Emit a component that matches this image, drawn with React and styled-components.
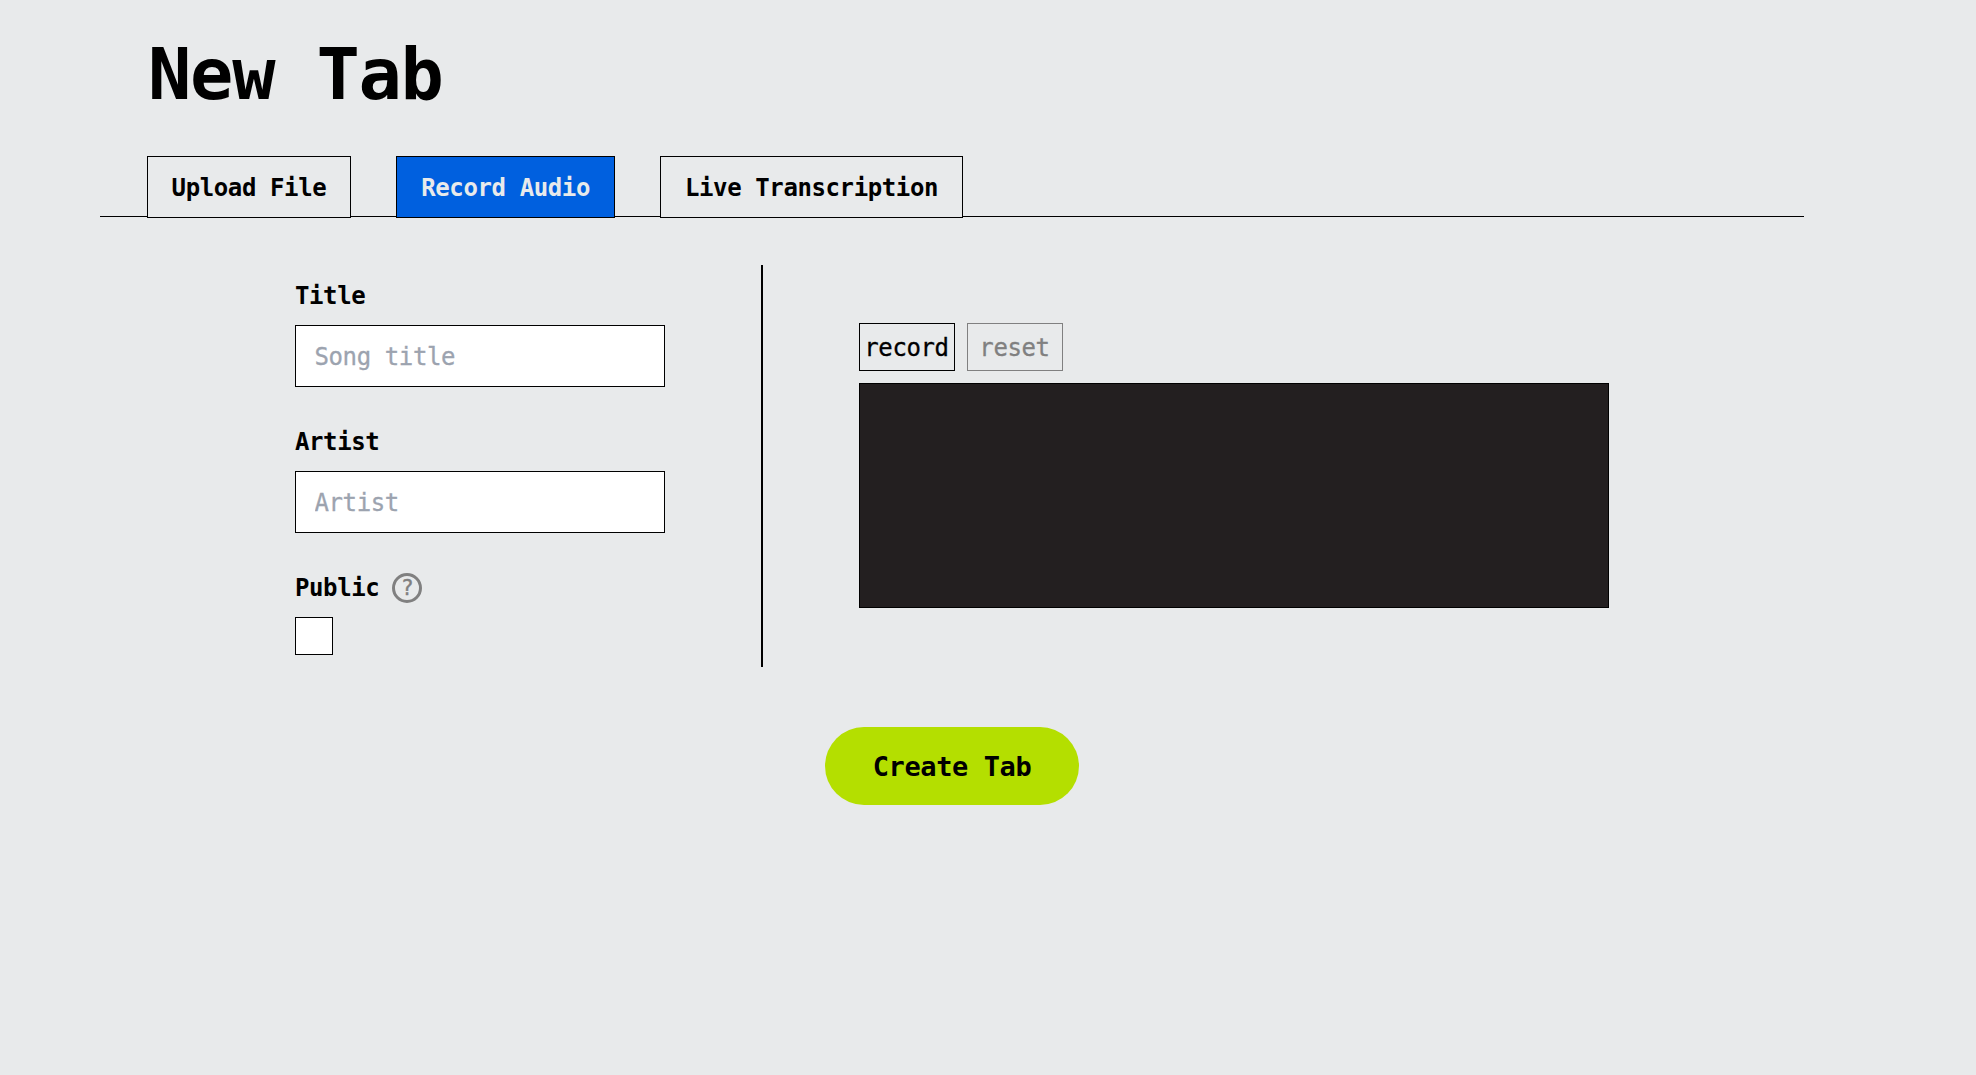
import React, { useState } from "react";
import styled, { createGlobalStyle } from "styled-components";

const GlobalStyle = createGlobalStyle`
  *, *::before, *::after { box-sizing: border-box; }
  body {
    margin: 0;
    min-height: 100vh;
    background: #e8eaeb;
    color: #000;
    font-family: "DejaVu Sans Mono", "Liberation Mono", monospace;
    font-size: 24px;
    line-height: 36px;
    letter-spacing: -0.39px;
  }
  button, input { font: inherit; letter-spacing: inherit; color: inherit; }
`;

const Page = styled.main`
  width: 1704px;
  margin-left: 100px;
  padding-top: 38px;
  display: flex;
  flex-direction: column;
`;

const Heading = styled.h1`
  margin: 0 0 46px 48px;
  font-size: 72px;
  line-height: 72px;
  font-weight: 700;
  letter-spacing: -1.25px;
`;

const TabList = styled.div`
  display: flex;
  gap: 45px;
  height: 61px;
  padding-left: 46.6px;
  border-bottom: 1px solid #000;
`;

const Tab = styled.button`
  flex: none;
  height: 62px;
  padding: 2px 24px 0;
  border: 1px solid #000;
  font-weight: 700;
  background: ${(p) => (p.$active ? "#0060df" : "#e8eaeb")};
  color: ${(p) => (p.$active ? "#e8eaeb" : "#000")};
`;

const Columns = styled.div`
  display: flex;
  margin-top: 48px;
  padding-left: 195px;
`;

const Fields = styled.div`
  display: flex;
  flex-direction: column;
  gap: 36px;
  width: 468px;
  padding: 12px 96px 12px 0;
  border-right: 2px solid #000;
`;

const Field = styled.div`
  display: flex;
  flex-direction: column;
  gap: 12px;
`;

const LabelRow = styled.div`
  display: flex;
  align-items: center;
  gap: 13px;
  height: 36px;
`;

const Label = styled.label`
  padding-top: 2px;
  line-height: 34px;
  font-weight: 700;
`;

const TextInput = styled.input`
  width: 370px;
  height: 62px;
  padding: 2px 18.5px 0;
  border: 1px solid #000;
  border-radius: 0;
  background: #fff;
  &::placeholder {
    color: #9ca3af;
    opacity: 1;
    -webkit-text-stroke: 0.3px #9ca3af;
  }
`;

const Help = styled.span`
  display: flex;
  align-items: center;
  justify-content: center;
  width: 30px;
  height: 30px;
  margin-top: 2px;
  border: 3px solid #808080;
  border-radius: 50%;
  color: #808080;
  font-size: 21px;
  line-height: 24px;
  letter-spacing: 0;
  -webkit-text-stroke: 0.4px #808080;
`;

const Checkbox = styled.input`
  appearance: none;
  width: 38px;
  height: 38px;
  margin: 0;
  border: 1px solid #000;
  background: #fff;
`;

const Recorder = styled.div`
  display: flex;
  flex-direction: column;
  gap: 12px;
  margin: 58px 0 0 96px;
`;

const Controls = styled.div`
  display: flex;
  gap: 12px;
`;

const ControlButton = styled.button`
  width: 96px;
  height: 48px;
  padding: 2px 1px 0 0;
  border: 1px solid currentColor;
  background: transparent;
  color: #000;
  -webkit-text-stroke: 0.3px currentColor;
  &:disabled { color: #808080; }
`;

const Waveform = styled.div`
  width: 750px;
  height: 225px;
  border: 1px solid #000;
  background: #231f20;
`;

const Submit = styled.button`
  align-self: center;
  width: 254px;
  height: 78px;
  margin-top: 60px;
  padding: 1px 0 0;
  border: 0;
  border-radius: 39px;
  background: #b4df00;
  font-size: 27px;
  font-weight: 700;
`;

const TABS = ["Upload File", "Record Audio", "Live Transcription"];

export default function App() {
  const [active, setActive] = useState("Record Audio");
  return (
    <>
      <GlobalStyle />
      <Page>
        <Heading>New Tab</Heading>
        <TabList>
          {TABS.map((name) => (
            <Tab key={name} $active={name === active} onClick={() => setActive(name)}>
              {name}
            </Tab>
          ))}
        </TabList>
        <Columns>
          <Fields>
            <Field>
              <Label htmlFor="title">Title</Label>
              <TextInput id="title" placeholder="Song title" />
            </Field>
            <Field>
              <Label htmlFor="artist">Artist</Label>
              <TextInput id="artist" placeholder="Artist" />
            </Field>
            <Field>
              <LabelRow>
                <Label htmlFor="public">Public</Label>
                <Help>?</Help>
              </LabelRow>
              <Checkbox id="public" type="checkbox" />
            </Field>
          </Fields>
          <Recorder>
            <Controls>
              <ControlButton>record</ControlButton>
              <ControlButton disabled>reset</ControlButton>
            </Controls>
            <Waveform />
          </Recorder>
        </Columns>
        <Submit>Create Tab</Submit>
      </Page>
    </>
  );
}
